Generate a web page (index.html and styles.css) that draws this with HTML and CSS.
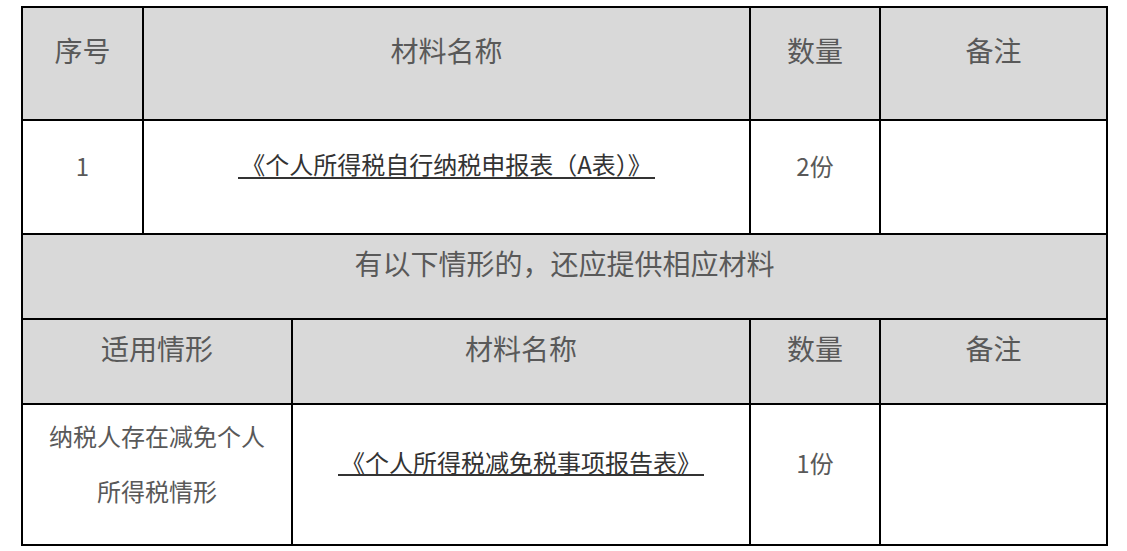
FILE: index.html
```html
<!DOCTYPE html>
<html lang="zh-CN">
<head>
<meta charset="utf-8">
<title>材料清单</title>
<link rel="stylesheet" href="styles.css">
</head>
<body>
<div class="sheet">
  <div class="cell head c1">序号</div>
  <div class="cell head c2">材料名称</div>
  <div class="cell head">数量</div>
  <div class="cell head">备注</div>

  <div class="cell body c1">1</div>
  <div class="cell body c2"><span class="doc">《个人所得税自行纳税申报表（A表）》</span></div>
  <div class="cell body">2份</div>
  <div class="cell body"></div>

  <div class="cell head full">有以下情形的，还应提供相应材料</div>

  <div class="cell head d1">适用情形</div>
  <div class="cell head">材料名称</div>
  <div class="cell head">数量</div>
  <div class="cell head">备注</div>

  <div class="cell body d1 multi">纳税人存在减免个人<br>所得税情形</div>
  <div class="cell body"><span class="doc">《个人所得税减免税事项报告表》</span></div>
  <div class="cell body">1份</div>
  <div class="cell body"></div>
</div>
</body>
</html>
```
FILE: styles.css
```css
html, body {
  margin: 0;
  padding: 0;
  background: #ffffff;
}

.sheet {
  margin: 6px 0 0 21px;
  width: 1083px;
  display: grid;
  grid-template-columns: 119px 147px 456px 128px 225px;
  grid-template-rows: 111px 112px 83px 83px 139px;
  gap: 2px;
  padding: 2px;
  background: #000000;
  font-family: "Noto Sans CJK SC", "Noto Sans", sans-serif;
  color: #595959;
}

.cell {
  display: flex;
  align-items: center;
  justify-content: center;
  text-align: center;
  padding-bottom: 24px;
  box-sizing: border-box;
}

.head {
  background: #d9d9d9;
  font-size: 28px;
  padding-bottom: 27px;
}

.body {
  background: #ffffff;
  font-size: 24px;
}

.c1 { grid-column: 1; }
.c2 { grid-column: 2 / span 2; }
.d1 { grid-column: 1 / span 2; }
.full { grid-column: 1 / span 5; }

.multi {
  line-height: 55px;
}

.doc {
  color: #333333;
  padding: 0 3px;
  border-bottom: 2px solid #333333;
  line-height: 1.05;
}
```
